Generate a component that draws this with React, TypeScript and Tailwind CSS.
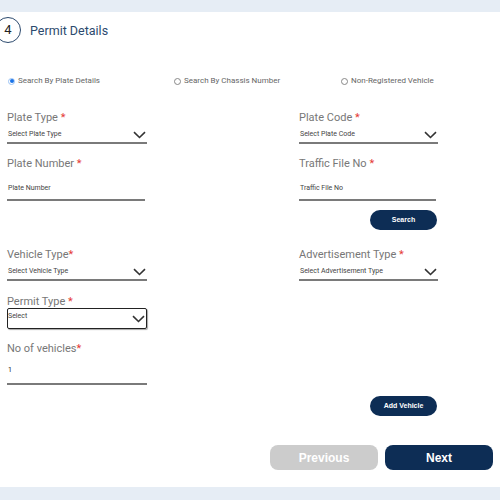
import React from "react";

const font = { fontFamily: "Roboto, 'Liberation Sans', sans-serif" };

function Chevron() {
  return (
    <svg width="13" height="8" viewBox="0 0 13 8" fill="none">
      <path d="M1 1.2 L6.5 6.5 L12 1.2" stroke="#333" strokeWidth="1.6" />
    </svg>
  );
}

function Label({ text, tight }: { text: string; tight?: boolean }) {
  return (
    <div className="text-[11px] leading-[13px] text-[#777]">
      {text}
      <span className="text-[#e53935]">{tight ? "*" : " *"}</span>
    </div>
  );
}

function SelectLine({ placeholder }: { placeholder: string }) {
  return (
    <div className="flex h-[20px] items-center justify-between border-b-2 border-[#7a7a7a] pl-[1px] pr-[1px] pt-[3px]">
      <span className="text-[7px] leading-[9px] text-[#444]">{placeholder}</span>
      <Chevron />
    </div>
  );
}

function InputLine({ value, dark, cls }: { value: string; dark?: boolean; cls: string }) {
  return (
    <div className={`${cls} border-b-2 border-[#7a7a7a] pl-[1px]`}>
      <div className={`text-[7px] leading-[9px] ${dark ? "text-[#222]" : "text-[#444]"}`}>{value}</div>
    </div>
  );
}

function Radio({ checked, text }: { checked?: boolean; text: string }) {
  return (
    <div className="flex items-center gap-[3px] text-[8px] text-[#666]">
      <span
        className={`flex h-[7px] w-[7px] items-center justify-center rounded-full border ${
          checked ? "border-[#9cc3f5]" : "border-[#888]"
        }`}
      >
        {checked && <span className="h-[4px] w-[4px] rounded-full bg-[#1a73e8]" />}
      </span>
      {text}
    </div>
  );
}

function SmallBtn({ text }: { text: string }) {
  return (
    <button
      type="button"
      className="h-[20px] w-[67px] rounded-full bg-[#0d2d55] text-[7px] font-bold text-white"
      style={{ fontFamily: "'Liberation Sans', Arial, sans-serif" }}
    >
      {text}
    </button>
  );
}

export default function App() {
  return (
    <div className="flex h-[500px] w-[500px] flex-col bg-[#e6edf5]" style={font}>
      <div className="mt-[12px] h-[475px] overflow-hidden bg-white">
        {/* header */}
        <div className="mt-[5px] flex items-center">
          <div className="ml-[-5px] flex h-[26px] w-[26px] items-center justify-center rounded-full border border-[#2c4a6e] text-[13px] text-[#222]">
            4
          </div>
          <div className="ml-[9px] pt-[3px] text-[12.5px] text-[#2c4a6e]">Permit Details</div>
        </div>

        {/* radios */}
        <div className="mt-[32px] flex pl-[8px]">
          <div className="w-[166px]">
            <Radio checked text="Search By Plate Details" />
          </div>
          <div className="w-[167px]">
            <Radio text="Search By Chassis Number" />
          </div>
          <Radio text="Non-Registered Vehicle" />
        </div>

        <div className="mt-[24px] grid grid-cols-[140px_139px] gap-x-[152px] pl-[7px]">
          {/* row 1 */}
          <div>
            <Label text="Plate Type" />
            <SelectLine placeholder="Select Plate Type" />
          </div>
          <div>
            <Label text="Plate Code" />
            <SelectLine placeholder="Select Plate Code" />
          </div>

          {/* row 2 */}
          <div className="mt-[13px]">
            <Label text="Plate Number" />
            <InputLine value="Plate Number" cls="w-[138px] h-[31px] pt-[14px]" />
          </div>
          <div className="mt-[13px]">
            <Label text="Traffic File No" />
            <InputLine value="Traffic File No" cls="w-[137px] h-[31px] pt-[14px]" />
          </div>

          <div />
          <div className="mt-[9px] flex pl-[71px]">
            <SmallBtn text="Search" />
          </div>

          {/* row 3 */}
          <div className="mt-[18px]">
            <Label text="Vehicle Type" tight />
            <SelectLine placeholder="Select Vehicle Type" />
          </div>
          <div className="mt-[18px]">
            <Label text="Advertisement Type" />
            <SelectLine placeholder="Select Advertisement Type" />
          </div>

          {/* permit type */}
          <div className="mt-[14px]">
            <Label text="Permit Type" />
            <div className="flex h-[21px] items-center justify-between rounded-[2px] border border-[#222] pr-[1px] shadow-[1px_1px_1px_rgba(0,0,0,0.35)]">
              <span className="mb-[4px] text-[7px] leading-[9px] text-[#444]">Select</span>
              <Chevron />
            </div>
          </div>
          <div />

          {/* no of vehicles */}
          <div className="mt-[13px]">
            <Label text="No of vehicles" tight />
            <InputLine value="1" dark cls="w-[140px] h-[30px] pt-[11px]" />
          </div>
          <div />

          <div />
          <div className="mt-[11px] flex pl-[71px]">
            <SmallBtn text="Add Vehicle" />
          </div>
        </div>

        {/* nav */}
        <div
          className="mt-[29px] flex justify-end gap-[7px] pr-[7px]"
          style={{ fontFamily: "'Liberation Sans', Arial, sans-serif" }}
        >
          <button
            type="button"
            className="h-[25px] w-[108px] rounded-[8px] bg-[#cccccc] text-[12px] font-bold text-white"
          >
            Previous
          </button>
          <button
            type="button"
            className="h-[25px] w-[108px] rounded-[8px] bg-[#0d2d55] text-[12px] font-bold text-white"
          >
            Next
          </button>
        </div>
      </div>
    </div>
  );
}
